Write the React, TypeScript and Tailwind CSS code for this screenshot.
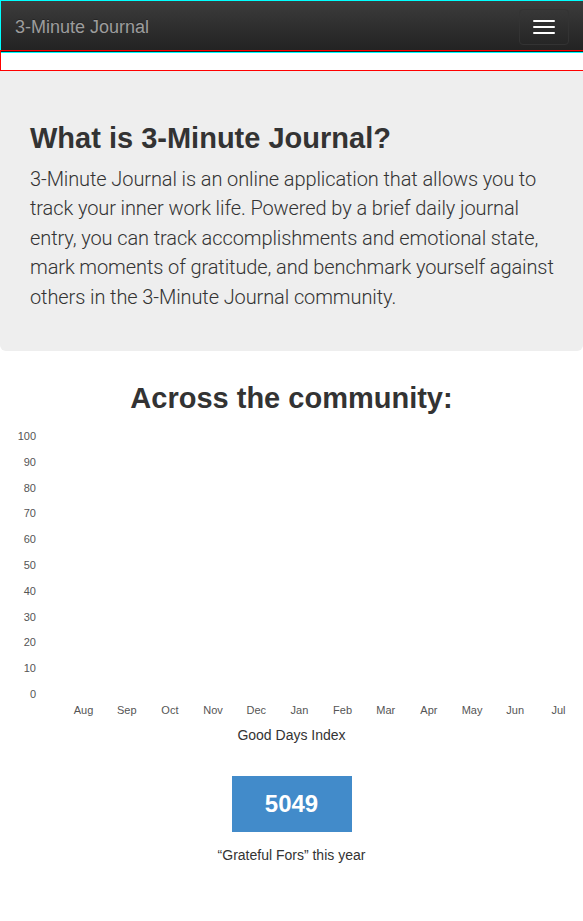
import React from "react";

const yLabels = ["100", "90", "80", "70", "60", "50", "40", "30", "20", "10", "0"];
const months = ["Aug", "Sep", "Oct", "Nov", "Dec", "Jan", "Feb", "Mar", "Apr", "May", "Jun", "Jul"];
const lines = [
  "3-Minute Journal is an online application that allows you to",
  "track your inner work life. Powered by a brief daily journal",
  "entry, you can track accomplishments and emotional state,",
  "mark moments of gratitude, and benchmark yourself against",
  "others in the 3-Minute Journal community.",
];

export default function App() {
  return (
    <div className="w-[583px] min-h-[921px] bg-white text-[#333] font-['Liberation_Sans',Arial,sans-serif] overflow-hidden">
      {/* Navbar */}
      <div className="h-[53px] border border-r-0 border-[#00ffff] bg-gradient-to-b from-[#3c3c3c] to-[#222]">
        <div className="h-[50px] border-b border-[#ff0000] flex items-center justify-between pl-[14px] pr-[14px]">
          <span className="pt-[3px] text-[18px] text-[#9d9d9d] [text-shadow:0_-1px_0_rgba(0,0,0,0.25)]">3-Minute Journal</span>
          <button className="mt-[2px] w-[50px] h-[36px] rounded-[4px] border border-[#333] flex flex-col items-center justify-center gap-[4px]">
            <span className="block w-[22px] h-[2px] bg-white rounded-[1px]" />
            <span className="block w-[22px] h-[2px] bg-white rounded-[1px]" />
            <span className="block w-[22px] h-[2px] bg-white rounded-[1px]" />
          </button>
        </div>
      </div>
      {/* red outline box */}
      <div className="relative z-10 mt-[-3px] h-[21px] border border-r-0 border-[#ff0000]" />

      {/* Jumbotron */}
      <div className="bg-[#eee] rounded-b-[6px] pl-[30px] pr-[20px] pt-[51px] pb-[39px]">
        <h2 className="text-[29px] font-bold leading-[33px] text-[#333]">What is 3-Minute Journal?</h2>
        <p className="mt-[10px] text-[20px] leading-[29.4px] font-light tracking-[-0.1px] text-[#333] font-['Roboto',sans-serif]">
          {lines.map((l) => (
            <span key={l} className="block whitespace-nowrap">{l}</span>
          ))}
        </p>
      </div>

      {/* Community */}
      <h2 className="mt-[31px] text-center text-[29px] font-bold leading-[33px] text-[#333]">Across the community:</h2>

      <div className="mt-[15px] flex items-start">
        <div className="w-[36px] h-[271px] flex flex-col justify-between items-end text-[11px] leading-[13px] text-[#555]">
          {yLabels.map((l) => (
            <span key={l}>{l}</span>
          ))}
        </div>
        <div className="ml-[26px] w-[518px]">
          <div className="h-[271px]" />
          <div className="mt-[3px] grid grid-cols-12 text-[11px] leading-[13px] text-[#555]">
            {months.map((m) => (
              <span key={m} className="text-center">{m}</span>
            ))}
          </div>
        </div>
      </div>

      <div className="mt-[8px] text-center text-[14px] leading-[20px] text-[#333]">Good Days Index</div>

      <div className="mt-[31px] flex justify-center">
        <div className="w-[120px] h-[56px] bg-[#428bca] flex items-center justify-center text-white text-[24px] font-bold">5049</div>
      </div>
      <div className="mt-[13px] text-center text-[14px] leading-[20px] text-[#333]">“Grateful Fors” this year</div>
    </div>
  );
}
